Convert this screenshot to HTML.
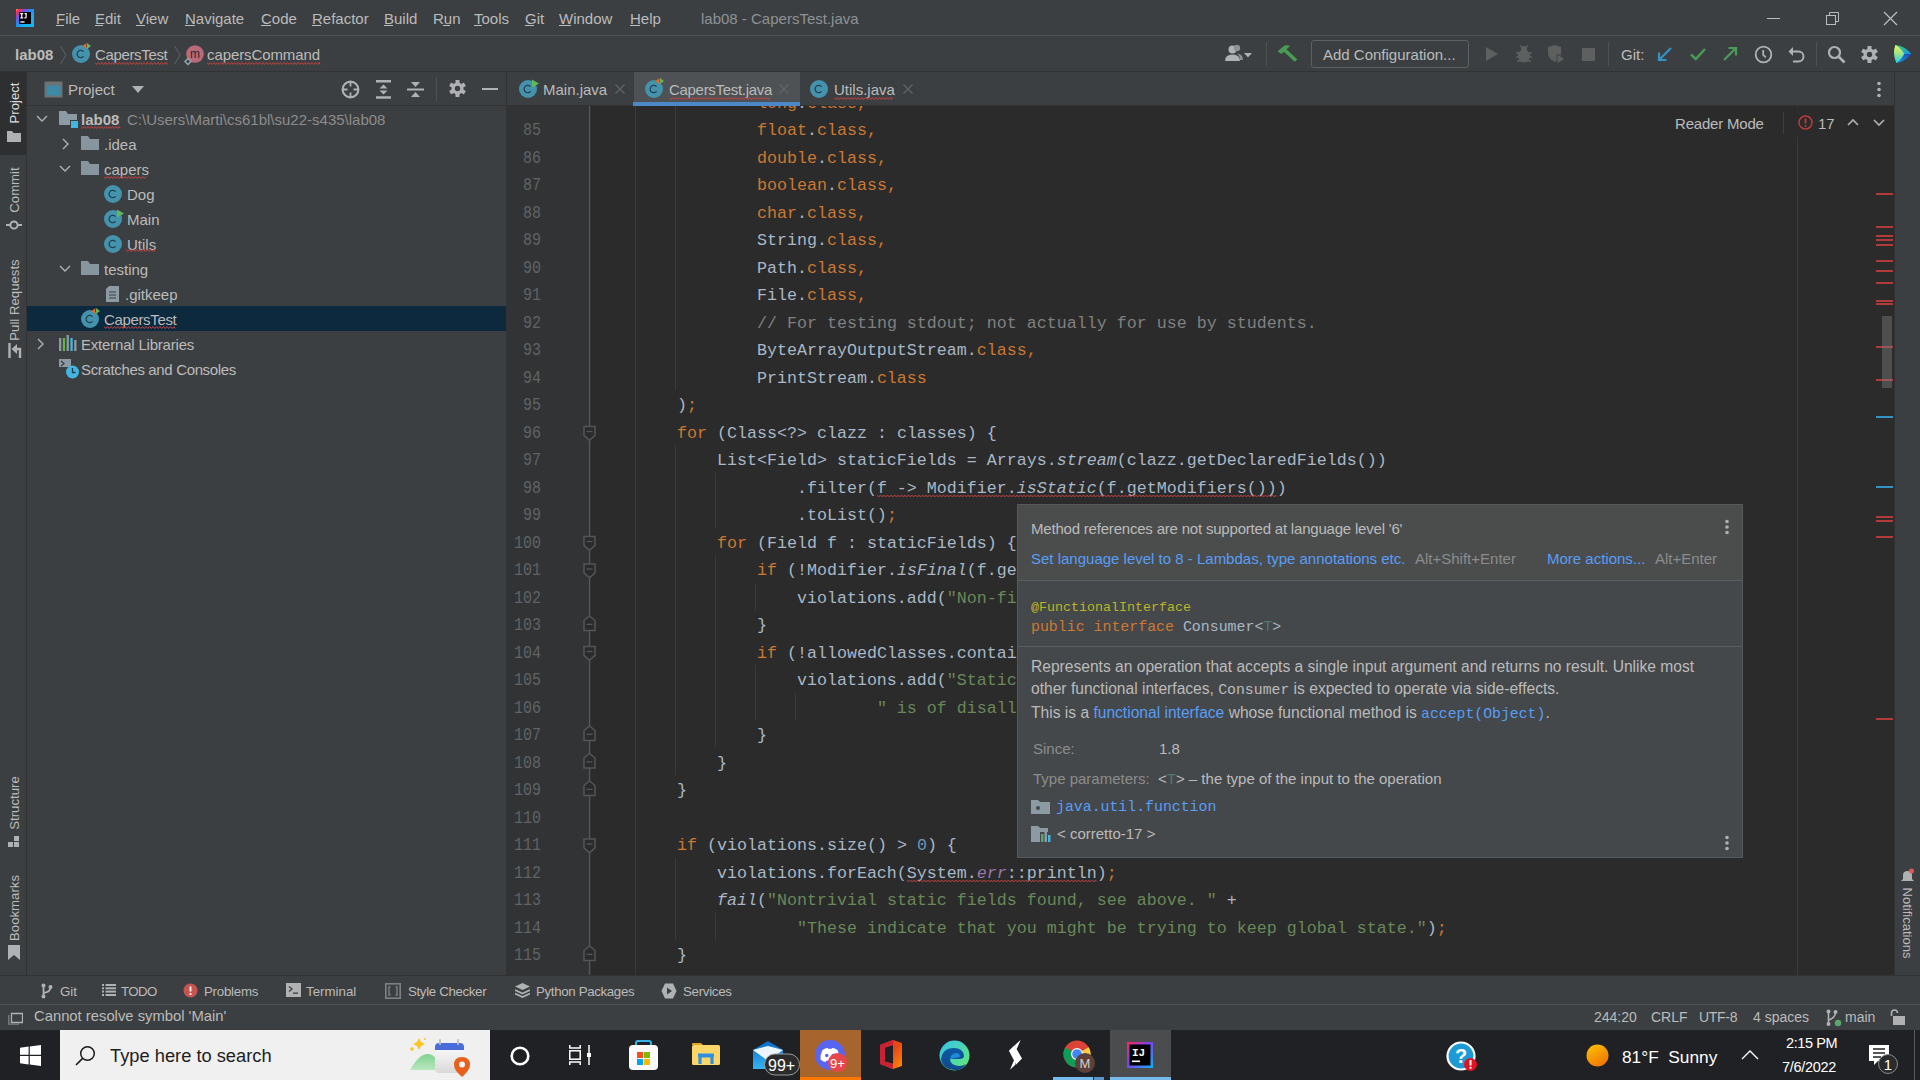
<!DOCTYPE html>
<html><head><meta charset="utf-8">
<style>
*{margin:0;padding:0;box-sizing:border-box}
html,body{width:1920px;height:1080px;overflow:hidden;background:#3c3f41}
body{position:relative;font-family:"Liberation Sans",sans-serif;font-size:15px;color:#bbbbbb}
.a{position:absolute}
.t{position:absolute;white-space:nowrap;line-height:1}
.mono{font-family:"Liberation Mono",monospace}
/* code */
#code{position:absolute;left:597px;top:106px;font-family:"Liberation Mono",monospace;font-size:16.67px;color:#a9b7c6;white-space:pre}
#code div{position:absolute;left:0;height:27.5px;line-height:27.5px}
.k{color:#cc7832}.s{color:#6a8759}.c{color:#808080}.n{color:#6897bb}.i{font-style:italic}.f{color:#9876aa;font-style:italic}
.ln{position:absolute;left:0;width:34px;text-align:right;font-family:"Liberation Mono",monospace;font-size:15px;color:#606366;line-height:27.5px;height:27.5px;transform:scaleY(1.2);transform-origin:50% 50%}
.sq{}
.sqt{}
u{text-decoration:none;border-bottom:1px solid currentColor}
</style></head><body>

<!-- title/menu bar -->
<div class="a" style="left:0;top:0;width:1920px;height:35px;background:#3c3f41"></div>
<div class="a" style="left:0;top:35px;width:1920px;height:1px;background:#515151"></div>
<!-- nav bar -->
<div class="a" style="left:0;top:36px;width:1920px;height:35px;background:#3c3f41"></div>
<div class="a" style="left:0;top:71px;width:1920px;height:1px;background:#323232"></div>

<!-- left stripe -->
<div class="a" style="left:0;top:72px;width:26px;height:904px;background:#3c3f41"></div>
<div class="a" style="left:0;top:72px;width:26px;height:83px;background:#2d2f30"></div>
<div class="a" style="left:26px;top:72px;width:1px;height:904px;background:#323232"></div>

<!-- project panel -->
<div class="a" style="left:27px;top:72px;width:479px;height:904px;background:#3c3f41"></div>
<div class="a" style="left:27px;top:105px;width:479px;height:1px;background:#323232"></div>
<div class="a" style="left:27px;top:306px;width:479px;height:25px;background:#0d293e"></div>
<div class="a" style="left:506px;top:72px;width:1px;height:904px;background:#323232"></div>

<!-- editor tabs -->
<div class="a" style="left:507px;top:72px;width:1390px;height:33px;background:#3c3f41"></div>
<div class="a" style="left:634px;top:72px;width:166px;height:33px;background:#4e5254"></div>
<div class="a" style="left:507px;top:105px;width:1390px;height:1px;background:#323232"></div>
<div class="a" style="left:633px;top:102px;width:167px;height:4px;background:#4a88c7"></div>

<!-- editor -->
<div class="a" style="left:507px;top:106px;width:1390px;height:869px;background:#2b2b2b"></div>
<div class="a" style="left:507px;top:106px;width:84px;height:869px;background:#313335"></div>
<div class="a" style="left:1797px;top:106px;width:1px;height:869px;background:#3b3b3b"></div>

<!-- code -->
<div id="code" style="height:869px;width:1200px;overflow:hidden">
<div style="top:-16.50px">                <span class="k">long</span>.<span class="k">class,</span></div>
<div style="top:11.00px">                <span class="k">float</span>.<span class="k">class,</span></div>
<div style="top:38.50px">                <span class="k">double</span>.<span class="k">class,</span></div>
<div style="top:66.00px">                <span class="k">boolean</span>.<span class="k">class,</span></div>
<div style="top:93.50px">                <span class="k">char</span>.<span class="k">class,</span></div>
<div style="top:121.00px">                String.<span class="k">class,</span></div>
<div style="top:148.50px">                Path.<span class="k">class,</span></div>
<div style="top:176.00px">                File.<span class="k">class,</span></div>
<div style="top:203.50px">                <span class="c">// For testing stdout; not actually for use by students.</span></div>
<div style="top:231.00px">                ByteArrayOutputStream.<span class="k">class,</span></div>
<div style="top:258.50px">                PrintStream.<span class="k">class</span></div>
<div style="top:286.00px">        )<span class="k">;</span></div>
<div style="top:313.50px">        <span class="k">for</span> (Class&lt;?&gt; clazz : classes) {</div>
<div style="top:341.00px">            List&lt;Field&gt; staticFields = Arrays.<span class="i">stream</span>(clazz.getDeclaredFields())</div>
<div style="top:368.50px">                    .filter(<span class="sq">f -&gt; Modifier.<span class="i">isStatic</span>(f.getModifiers())</span>)</div>
<div style="top:396.00px">                    .toList()<span class="k">;</span></div>
<div style="top:423.50px">            <span class="k">for</span> (Field f : staticFields) {</div>
<div style="top:451.00px">                <span class="k">if</span> (!Modifier.<span class="i">isFinal</span>(f.getModifiers())) {</div>
<div style="top:478.50px">                    violations.add(<span class="s">"Non-final static field "</span> + f.getName())<span class="k">;</span></div>
<div style="top:506.00px">                }</div>
<div style="top:533.50px">                <span class="k">if</span> (!allowedClasses.contains(f.getType())) {</div>
<div style="top:561.00px">                    violations.add(<span class="s">"Static field "</span> + f.getName() +</div>
<div style="top:588.50px">                            <span class="s">" is of disallowed type "</span> + f.getType())<span class="k">;</span></div>
<div style="top:616.00px">                }</div>
<div style="top:643.50px">            }</div>
<div style="top:671.00px">        }</div>
<div style="top:698.50px"></div>
<div style="top:726.00px">        <span class="k">if</span> (violations.size() &gt; <span class="n">0</span>) {</div>
<div style="top:753.50px">            violations.forEach(<span class="sq">System.<span class="f">err</span>::println</span>)<span class="k">;</span></div>
<div style="top:781.00px">            <span class="i">fail</span>(<span class="s">"Nontrivial static fields found, see above. "</span> +</div>
<div style="top:808.50px">                    <span class="s">"These indicate that you might be trying to keep global state."</span>)<span class="k">;</span></div>
<div style="top:836.00px">        }</div>
<div style="top:863.50px"></div>
</div>
<div class="a" style="left:507px;top:106px;width:83px;height:869px;overflow:hidden">
<div class="ln" style="top:11.00px">85</div>
<div class="ln" style="top:38.50px">86</div>
<div class="ln" style="top:66.00px">87</div>
<div class="ln" style="top:93.50px">88</div>
<div class="ln" style="top:121.00px">89</div>
<div class="ln" style="top:148.50px">90</div>
<div class="ln" style="top:176.00px">91</div>
<div class="ln" style="top:203.50px">92</div>
<div class="ln" style="top:231.00px">93</div>
<div class="ln" style="top:258.50px">94</div>
<div class="ln" style="top:286.00px">95</div>
<div class="ln" style="top:313.50px">96</div>
<div class="ln" style="top:341.00px">97</div>
<div class="ln" style="top:368.50px">98</div>
<div class="ln" style="top:396.00px">99</div>
<div class="ln" style="top:423.50px">100</div>
<div class="ln" style="top:451.00px">101</div>
<div class="ln" style="top:478.50px">102</div>
<div class="ln" style="top:506.00px">103</div>
<div class="ln" style="top:533.50px">104</div>
<div class="ln" style="top:561.00px">105</div>
<div class="ln" style="top:588.50px">106</div>
<div class="ln" style="top:616.00px">107</div>
<div class="ln" style="top:643.50px">108</div>
<div class="ln" style="top:671.00px">109</div>
<div class="ln" style="top:698.50px">110</div>
<div class="ln" style="top:726.00px">111</div>
<div class="ln" style="top:753.50px">112</div>
<div class="ln" style="top:781.00px">113</div>
<div class="ln" style="top:808.50px">114</div>
<div class="ln" style="top:836.00px">115</div>
</div>

<!-- right stripe -->
<div class="a" style="left:1894px;top:72px;width:1px;height:904px;background:#323232"></div>
<div class="a" style="left:1895px;top:72px;width:25px;height:904px;background:#3c3f41"></div>

<!-- bottom stripe & status -->
<div class="a" style="left:0;top:975px;width:1920px;height:1px;background:#323232"></div>
<div class="a" style="left:0;top:976px;width:1920px;height:28px;background:#3c3f41"></div>
<div class="a" style="left:0;top:1004px;width:1920px;height:1px;background:#515151"></div>
<div class="a" style="left:0;top:1005px;width:1920px;height:25px;background:#3c3f41"></div>

<!-- taskbar -->
<div class="a" style="left:0;top:1030px;width:1920px;height:50px;background:#1f2023"></div>
<div class="a" style="left:61px;top:1031px;width:429px;height:49px;background:#f0f0f0"></div>


<!-- ===== top ===== -->
<svg class="a" style="left:16px;top:9px" width="18" height="18" viewBox="0 0 18 18"><defs><linearGradient id="ijg" x1="0" y1="0" x2="0.7" y2="0.7"><stop offset="0" stop-color="#ff9a3c"/><stop offset="0.15" stop-color="#fe2857"/><stop offset="0.4" stop-color="#7b4de0"/><stop offset="0.65" stop-color="#1d8cf5"/><stop offset="1" stop-color="#17b3f0"/></linearGradient></defs>
<rect x="0" y="0" width="18" height="18" fill="url(#ijg)"/><rect x="3" y="3" width="12" height="12" fill="#0a0008"/>
<path d="M4.3 4.6H7.2M5.75 4.6V8.9M4.3 8.9H7.2M8.6 4.6H10.8M10.1 4.6V8.2Q10.1 8.9 9.2 8.9H8.4" stroke="#fff" stroke-width="1.2" fill="none"/><rect x="4.3" y="12.3" width="4.3" height="1.3" fill="#fff"/></svg>
<div class="t" style="left:56px;top:11.30px;font-size:15px;color:#bbbbbb">File</div>
<div class="t" style="left:95px;top:11.30px;font-size:15px;color:#bbbbbb">Edit</div>
<div class="t" style="left:136px;top:11.30px;font-size:15px;color:#bbbbbb">View</div>
<div class="t" style="left:185px;top:11.30px;font-size:15px;color:#bbbbbb">Navigate</div>
<div class="t" style="left:261px;top:11.30px;font-size:15px;color:#bbbbbb">Code</div>
<div class="t" style="left:312px;top:11.30px;font-size:15px;color:#bbbbbb">Refactor</div>
<div class="t" style="left:384px;top:11.30px;font-size:15px;color:#bbbbbb">Build</div>
<div class="t" style="left:433px;top:11.30px;font-size:15px;color:#bbbbbb">Run</div>
<div class="t" style="left:474px;top:11.30px;font-size:15px;color:#bbbbbb">Tools</div>
<div class="t" style="left:525px;top:11.30px;font-size:15px;color:#bbbbbb">Git</div>
<div class="t" style="left:559px;top:11.30px;font-size:15px;color:#bbbbbb">Window</div>
<div class="t" style="left:630px;top:11.30px;font-size:15px;color:#bbbbbb">Help</div>
<div class="a" style="left:56px;top:25px;width:8px;height:1px;background:#bbbbbb"></div>
<div class="a" style="left:95px;top:25px;width:8px;height:1px;background:#bbbbbb"></div>
<div class="a" style="left:136px;top:25px;width:9px;height:1px;background:#bbbbbb"></div>
<div class="a" style="left:185px;top:25px;width:10px;height:1px;background:#bbbbbb"></div>
<div class="a" style="left:261px;top:25px;width:10px;height:1px;background:#bbbbbb"></div>
<div class="a" style="left:312px;top:25px;width:9px;height:1px;background:#bbbbbb"></div>
<div class="a" style="left:384px;top:25px;width:9px;height:1px;background:#bbbbbb"></div>
<div class="a" style="left:443px;top:25px;width:7px;height:1px;background:#bbbbbb"></div>
<div class="a" style="left:474px;top:25px;width:8px;height:1px;background:#bbbbbb"></div>
<div class="a" style="left:525px;top:25px;width:9px;height:1px;background:#bbbbbb"></div>
<div class="a" style="left:559px;top:25px;width:12px;height:1px;background:#bbbbbb"></div>
<div class="a" style="left:630px;top:25px;width:10px;height:1px;background:#bbbbbb"></div>
<div class="t" style="left:701px;top:11.30px;font-size:15px;color:#8e9296">lab08 - CapersTest.java</div>
<div class="a" style="left:1767px;top:18px;width:13px;height:1px;background:#bbbbbb"></div>
<svg class="a" style="left:1825px;top:11px" width="15" height="15" viewBox="0 0 15 15"><rect x="1.5" y="4.5" width="9" height="9" fill="none" stroke="#bbb"/><path d="M4.5 4.5V1.5h9v9h-3" fill="none" stroke="#bbb"/></svg>
<svg class="a" style="left:1883px;top:11px" width="15" height="15" viewBox="0 0 15 15"><path d="M1 1L14 14M14 1L1 14" stroke="#bbb" stroke-width="1.3"/></svg>
<div class="t" style="left:15px;top:47.30px;font-size:15px;color:#bbbbbb;font-weight:bold">lab08</div>
<svg class="a" style="left:59px;top:45px" width="9" height="20" viewBox="0 0 9 20"><path d="M1.5 1L7 10L1.5 19" fill="none" stroke="#5f6366" stroke-width="1"/></svg>
<svg class="a" style="left:72px;top:43px" width="21" height="22" viewBox="0 0 21 22"><circle cx="9" cy="11" r="9" fill="#4592ad"/><path d="M11.6 8.6A3.7 3.7 0 1 0 11.6 13.4" fill="none" stroke="#1e3a46" stroke-width="1.15"/><path d="M14.3 0V6L10.8 3Z" fill="#f26522"/><path d="M15 0V6L19 3Z" fill="#5fb85f"/></svg>
<div class="t" style="left:95px;top:47.30px;font-size:15px;color:#bbbbbb;letter-spacing:-0.35px"><span class="sqt">CapersTest</span></div>
<svg class="a" style="left:173px;top:45px" width="9" height="20" viewBox="0 0 9 20"><path d="M1.5 1L7 10L1.5 19" fill="none" stroke="#5f6366" stroke-width="1"/></svg>
<svg class="a" style="left:183px;top:44px" width="22" height="22" viewBox="0 0 22 22"><circle cx="12" cy="10" r="8.8" fill="#b9697a"/><text x="12" y="14" font-family="Liberation Sans" font-size="12" fill="#2b2b2b" text-anchor="middle">m</text><path d="M5 14.5L8 17.5L5 20.5L2 17.5Z" fill="#3c3f41" stroke="#9aa7b0" stroke-width="1.4"/></svg>
<div class="t" style="left:207px;top:47.30px;font-size:15px;color:#bbbbbb;letter-spacing:-0.1px"><span class="sqt">capersCommand</span></div>
<svg class="a" style="left:1224px;top:44px" width="34" height="20" viewBox="0 0 34 20"><circle cx="8.5" cy="5.5" r="4" fill="#afb1b3"/><path d="M1 17Q1 10.5 8.5 10.5Q16 10.5 16 17Z" fill="#afb1b3"/><circle cx="13" cy="4" r="3.2" fill="#8f9193"/><path d="M12.5 9.5Q19 9.5 19 16H16Q16 11 12.5 9.5Z" fill="#8f9193"/><path d="M20 9h8l-4 4.5Z" fill="#afb1b3"/></svg>
<div class="a" style="left:1266px;top:42px;width:1px;height:24px;background:#515151"></div>
<svg class="a" style="left:1277px;top:44px" width="20" height="20" viewBox="0 0 20 20"><path d="M0.5 7.5L7.5 1.5L12 1.3L12.5 2.5L4.5 10Z" fill="#499c54"/><path d="M7 5.5L19 16.5" stroke="#499c54" stroke-width="3.6"/></svg>
<div class="a" style="left:1311px;top:40px;width:158px;height:28px;border:1px solid #5e6060;border-radius:3px"></div>
<div class="t" style="left:1323px;top:47.30px;font-size:15px;color:#bbbbbb">Add Configuration...</div>
<svg class="a" style="left:1485px;top:46px" width="14" height="16" viewBox="0 0 14 16"><path d="M1 1L13 8L1 15Z" fill="#5e6060"/></svg>
<svg class="a" style="left:1515px;top:44px" width="18" height="20" viewBox="0 0 18 20"><ellipse cx="9" cy="12" rx="6" ry="6.5" fill="#5e6060"/><circle cx="9" cy="5" r="3" fill="#5e6060"/><path d="M1 9h16M1 13h16M2 17h14M5 1l2 3M13 1l-2 3" stroke="#5e6060" stroke-width="1.3"/></svg>
<svg class="a" style="left:1546px;top:44px" width="22" height="22" viewBox="0 0 22 22"><path d="M2 3L9 1L15 3V9Q15 15 9 18Q2 15 2 9Z" fill="#5e6060"/><path d="M11 10L19 15L11 20Z" fill="#5e6060" stroke="#3c3f41" stroke-width="1"/></svg>
<div class="a" style="left:1582px;top:48px;width:13px;height:13px;background:#5e6060"></div>
<div class="a" style="left:1608px;top:42px;width:1px;height:24px;background:#515151"></div>
<div class="t" style="left:1621px;top:47.30px;font-size:15px;color:#bbbbbb">Git:</div>
<svg class="a" style="left:1656px;top:45px" width="18" height="18" viewBox="0 0 18 18"><path d="M15 3L3 15M3 7.5V15H10.5" fill="none" stroke="#3592c4" stroke-width="2.2"/></svg>
<svg class="a" style="left:1689px;top:45px" width="18" height="18" viewBox="0 0 18 18"><path d="M2 9.5L6.8 14L16 4" fill="none" stroke="#499c54" stroke-width="2.4"/></svg>
<svg class="a" style="left:1721px;top:45px" width="18" height="18" viewBox="0 0 18 18"><path d="M3 15L15 3M7.5 3H15V10.5" fill="none" stroke="#499c54" stroke-width="2.2"/></svg>
<svg class="a" style="left:1754px;top:45px" width="19" height="19" viewBox="0 0 19 19"><circle cx="9.5" cy="9.5" r="7.8" fill="none" stroke="#afb1b3" stroke-width="1.8"/><path d="M9.2 5V9.8L11.8 12.4" fill="none" stroke="#afb1b3" stroke-width="1.8"/></svg>
<svg class="a" style="left:1787px;top:45px" width="19" height="19" viewBox="0 0 19 19"><path d="M4 6.5H11.5A5 5 0 0 1 11.5 16.5H6" fill="none" stroke="#afb1b3" stroke-width="1.9"/><path d="M1.5 6.5L6 2V11Z" fill="#afb1b3"/></svg>
<div class="a" style="left:1816px;top:42px;width:1px;height:24px;background:#515151"></div>
<svg class="a" style="left:1827px;top:45px" width="19" height="19" viewBox="0 0 19 19"><circle cx="7.5" cy="7.5" r="5.5" fill="none" stroke="#afb1b3" stroke-width="2.2"/><path d="M11.5 11.5L17.5 17.5" stroke="#afb1b3" stroke-width="2.6"/></svg>
<svg class="a" style="left:1861px;top:46px" width="17" height="17" viewBox="0 0 17 17"><g fill="#afb1b3"><circle cx="8.5" cy="8.5" r="6"/><rect x="6.5" y="0" width="4" height="4" rx="0.5"/><rect x="6.5" y="13" width="4" height="4" rx="0.5"/><rect x="6.5" y="0" width="4" height="4" rx="0.5" transform="rotate(60 8.5 8.5)"/><rect x="6.5" y="13" width="4" height="4" rx="0.5" transform="rotate(60 8.5 8.5)"/><rect x="6.5" y="0" width="4" height="4" rx="0.5" transform="rotate(120 8.5 8.5)"/><rect x="6.5" y="13" width="4" height="4" rx="0.5" transform="rotate(120 8.5 8.5)"/></g><circle cx="8.5" cy="8.5" r="2.7" fill="#3c3f41"/></svg>
<svg class="a" style="left:1893px;top:44px" width="20" height="20" viewBox="0 0 20 20"><defs><linearGradient id="tbl" x1="0" y1="0" x2="0" y2="1"><stop offset="0" stop-color="#f4f65a"/><stop offset="0.5" stop-color="#98e38a"/><stop offset="1" stop-color="#22d0e6"/></linearGradient><linearGradient id="tbu" x1="0" y1="0" x2="1" y2="1"><stop offset="0" stop-color="#2fd67a"/><stop offset="1" stop-color="#1a8ee8"/></linearGradient><linearGradient id="tbd" x1="1" y1="0" x2="0" y2="1"><stop offset="0" stop-color="#1f47b8"/><stop offset="1" stop-color="#1596e8"/></linearGradient></defs><path d="M2.5 1Q-0.5 10 3.5 19L11 10Z" fill="url(#tbl)"/><path d="M2.5 1Q12 2 18.5 10L11 10Z" fill="url(#tbu)"/><path d="M3.5 19Q13 17 18.5 10L11 10Z" fill="url(#tbd)"/><path d="M2.5 1Q9 5 11 10Q9 15 3.5 19Q-0.5 10 2.5 1Z" fill="url(#tbl)"/></svg>
<!-- ===== project panel ===== -->
<div class="t" style="left:15px;top:102.5px;font-size:13.2px;color:#dddddd;transform:translate(-50%,-50%) rotate(-90deg)">Project</div>
<svg class="a" style="left:7px;top:130px" width="14" height="12" viewBox="0 0 14 12"><path d="M0 1H5L6.5 3H14V12H0Z" fill="#afb1b3"/></svg>
<div class="t" style="left:15px;top:189.5px;font-size:13.2px;color:#bbbbbb;transform:translate(-50%,-50%) rotate(-90deg)">Commit</div>
<svg class="a" style="left:6px;top:217px" width="16" height="16" viewBox="0 0 16 16"><circle cx="8" cy="8" r="3.6" fill="none" stroke="#afb1b3" stroke-width="2"/><path d="M0 8H4M12 8H16" stroke="#afb1b3" stroke-width="2"/></svg>
<div class="t" style="left:15px;top:299.5px;font-size:13.2px;color:#bbbbbb;transform:translate(-50%,-50%) rotate(-90deg)">Pull Requests</div>
<svg class="a" style="left:8px;top:343px" width="14" height="15" viewBox="0 0 14 15"><path d="M1.5 0V15M12 15V6H6" fill="none" stroke="#afb1b3" stroke-width="2.4"/><path d="M3.5 6L9 1V11Z" fill="#afb1b3"/></svg>
<div class="t" style="left:15px;top:803.0px;font-size:13.2px;color:#bbbbbb;transform:translate(-50%,-50%) rotate(-90deg)">Structure</div>
<svg class="a" style="left:8px;top:836px" width="13" height="12" viewBox="0 0 13 12"><rect x="6" y="0" width="5" height="5" fill="#afb1b3"/><rect x="0" y="6" width="5" height="5" fill="#afb1b3"/><rect x="6" y="6" width="5" height="5" fill="#afb1b3"/></svg>
<div class="t" style="left:15px;top:908.0px;font-size:13.2px;color:#bbbbbb;transform:translate(-50%,-50%) rotate(-90deg)">Bookmarks</div>
<svg class="a" style="left:8px;top:945px" width="12" height="15" viewBox="0 0 12 15"><path d="M0 0H12V15L6 10L0 15Z" fill="#afb1b3"/></svg>
<svg class="a" style="left:44px;top:81px" width="19" height="17" viewBox="0 0 19 17"><rect x="0.5" y="0.5" width="18" height="16" fill="#6e7274"/><rect x="2.5" y="4.5" width="14" height="10" fill="#3d8aa6"/></svg>
<div class="t" style="left:68px;top:82.30px;font-size:15px;color:#bbbbbb">Project</div>
<svg class="a" style="left:132px;top:86px" width="12" height="8" viewBox="0 0 12 8"><path d="M0 0H12L6 7Z" fill="#afb1b3"/></svg>
<svg class="a" style="left:341px;top:80px" width="19" height="19" viewBox="0 0 19 19"><circle cx="9.5" cy="9.5" r="7.9" fill="none" stroke="#afb1b3" stroke-width="2.1"/><path d="M9.5 1.5V6.5M9.5 12.5V17.5M1.5 9.5H6.5M12.5 9.5H17.5" stroke="#afb1b3" stroke-width="1.8"/></svg>
<svg class="a" style="left:375px;top:80px" width="17" height="19" viewBox="0 0 17 19"><path d="M1 1.3H16M1 17.5H16" stroke="#afb1b3" stroke-width="2.6"/><path d="M8.5 4.5L12.5 8.6H4.5Z M8.5 14.5L12.5 10.4H4.5Z" fill="#afb1b3"/></svg>
<svg class="a" style="left:407px;top:80px" width="17" height="19" viewBox="0 0 17 19"><path d="M0 9.5H17" stroke="#afb1b3" stroke-width="2"/><path d="M4 2H13L8.5 7Z M4 17H13L8.5 12Z" fill="#afb1b3"/></svg>
<div class="a" style="left:436px;top:77px;width:1px;height:24px;background:#515151"></div>
<svg class="a" style="left:449px;top:80px" width="17" height="17" viewBox="0 0 17 17"><g fill="#afb1b3"><circle cx="8.5" cy="8.5" r="6"/><rect x="6.5" y="0" width="4" height="4" rx="0.5"/><rect x="6.5" y="13" width="4" height="4" rx="0.5"/><rect x="6.5" y="0" width="4" height="4" rx="0.5" transform="rotate(60 8.5 8.5)"/><rect x="6.5" y="13" width="4" height="4" rx="0.5" transform="rotate(60 8.5 8.5)"/><rect x="6.5" y="0" width="4" height="4" rx="0.5" transform="rotate(120 8.5 8.5)"/><rect x="6.5" y="13" width="4" height="4" rx="0.5" transform="rotate(120 8.5 8.5)"/></g><circle cx="8.5" cy="8.5" r="2.7" fill="#3c3f41"/></svg>
<div class="a" style="left:482px;top:88px;width:16px;height:2px;background:#afb1b3"></div>
<svg class="a" style="left:36px;top:115px" width="12" height="8" viewBox="0 0 12 8"><path d="M1 1L6 6L11 1" fill="none" stroke="#afb1b3" stroke-width="1.4"/></svg>
<svg class="a" style="left:59px;top:111px" width="20" height="18" viewBox="0 0 20 18"><path d="M0 0H7L9 3H18V14H0Z" fill="#8b9aa3"/><rect x="11" y="9" width="8" height="8" fill="#3c3f41"/><rect x="12" y="10" width="7" height="7" fill="#40b6e0"/></svg>
<div class="t" style="left:81px;top:111.80px;font-size:15px;color:#bbbbbb;font-weight:bold"><span class="sqt">lab08</span></div>
<div class="t" style="left:127px;top:111.80px;font-size:15px;color:#8c8c8c">C:\Users\Marti\cs61bl\su22-s435\lab08</div>
<svg class="a" style="left:62px;top:138px" width="8" height="12" viewBox="0 0 8 12"><path d="M1 1L6 6L1 11" fill="none" stroke="#afb1b3" stroke-width="1.4"/></svg>
<svg class="a" style="left:81px;top:136px" width="18" height="15" viewBox="0 0 18 15"><path d="M0 0H7L9 3H18V14H0Z" fill="#8b9aa3" opacity="0.95"/></svg>
<div class="t" style="left:104px;top:136.80px;font-size:15px;color:#bbbbbb">.idea</div>
<svg class="a" style="left:59px;top:165px" width="12" height="8" viewBox="0 0 12 8"><path d="M1 1L6 6L11 1" fill="none" stroke="#afb1b3" stroke-width="1.4"/></svg>
<svg class="a" style="left:81px;top:161px" width="18" height="15" viewBox="0 0 18 15"><path d="M0 0H7L9 3H18V14H0Z" fill="#8b9aa3" opacity="0.95"/></svg>
<div class="t" style="left:104px;top:161.80px;font-size:15px;color:#bbbbbb"><span class="sqt">capers</span></div>
<svg class="a" style="left:104px;top:183px" width="21" height="22" viewBox="0 0 21 22"><circle cx="9" cy="11" r="9" fill="#4592ad"/><path d="M11.6 8.6A3.7 3.7 0 1 0 11.6 13.4" fill="none" stroke="#1e3a46" stroke-width="1.15"/></svg>
<div class="t" style="left:127px;top:186.80px;font-size:15px;color:#bbbbbb">Dog</div>
<svg class="a" style="left:104px;top:208px" width="21" height="22" viewBox="0 0 21 22"><circle cx="9" cy="11" r="9" fill="#4592ad"/><path d="M11.6 8.6A3.7 3.7 0 1 0 11.6 13.4" fill="none" stroke="#1e3a46" stroke-width="1.15"/><path d="M13 1.5L20 5.5L13 9.5Z" fill="#5fb85f"/></svg>
<div class="t" style="left:127px;top:211.80px;font-size:15px;color:#bbbbbb">Main</div>
<svg class="a" style="left:104px;top:233px" width="21" height="22" viewBox="0 0 21 22"><circle cx="9" cy="11" r="9" fill="#4592ad"/><path d="M11.6 8.6A3.7 3.7 0 1 0 11.6 13.4" fill="none" stroke="#1e3a46" stroke-width="1.15"/></svg>
<div class="t" style="left:127px;top:236.80px;font-size:15px;color:#bbbbbb"><span class="sqt">Utils</span></div>
<svg class="a" style="left:59px;top:265px" width="12" height="8" viewBox="0 0 12 8"><path d="M1 1L6 6L11 1" fill="none" stroke="#afb1b3" stroke-width="1.4"/></svg>
<svg class="a" style="left:81px;top:261px" width="18" height="15" viewBox="0 0 18 15"><path d="M0 0H7L9 3H18V14H0Z" fill="#8b9aa3" opacity="0.95"/></svg>
<div class="t" style="left:104px;top:261.80px;font-size:15px;color:#bbbbbb">testing</div>
<svg class="a" style="left:106px;top:286px" width="13" height="16" viewBox="0 0 13 16"><path d="M3 0H13V16H0V3Z" fill="#8b9aa3"/><path d="M3 6H10M3 9H10M3 12H10" stroke="#3c3f41" stroke-width="1.2"/></svg>
<div class="t" style="left:125px;top:286.80px;font-size:15px;color:#bbbbbb">.gitkeep</div>
<svg class="a" style="left:81px;top:308px" width="21" height="22" viewBox="0 0 21 22"><circle cx="9" cy="11" r="9" fill="#4592ad"/><path d="M11.6 8.6A3.7 3.7 0 1 0 11.6 13.4" fill="none" stroke="#1e3a46" stroke-width="1.15"/><path d="M14.3 0V6L10.8 3Z" fill="#f26522"/><path d="M15 0V6L19 3Z" fill="#5fb85f"/></svg>
<div class="t" style="left:104px;top:311.80px;font-size:15px;color:#bbbbbb;letter-spacing:-0.35px"><span class="sqt">CapersTest</span></div>
<svg class="a" style="left:37px;top:338px" width="8" height="12" viewBox="0 0 8 12"><path d="M1 1L6 6L1 11" fill="none" stroke="#afb1b3" stroke-width="1.4"/></svg>
<svg class="a" style="left:59px;top:335px" width="19" height="16" viewBox="0 0 19 16"><rect x="0" y="3" width="2.3" height="13" fill="#8b9aa3"/><rect x="3.8" y="3" width="2.3" height="13" fill="#62b543"/><rect x="7.6" y="0" width="2.3" height="16" fill="#8b9aa3"/><rect x="11.4" y="3" width="2.3" height="13" fill="#40b6e0"/><rect x="15.2" y="5" width="2.3" height="11" fill="#8b9aa3"/></svg>
<div class="t" style="left:81px;top:336.80px;font-size:15px;color:#bbbbbb;letter-spacing:-0.2px">External Libraries</div>
<svg class="a" style="left:59px;top:359px" width="20" height="20" viewBox="0 0 20 20"><path d="M0 0H12V8H0Z" fill="#8b9aa3"/><path d="M2 2L5 4.5L2 7" stroke="#3c3f41" fill="none" stroke-width="1.2"/><circle cx="13.5" cy="13" r="6.5" fill="#40b6e0"/><path d="M13.5 9V13.5H16.5" stroke="#1f3a45" fill="none" stroke-width="1.3"/></svg>
<div class="t" style="left:81px;top:361.80px;font-size:15px;color:#bbbbbb;letter-spacing:-0.35px">Scratches and Consoles</div>
<!-- ===== editor tabs ===== -->
<svg class="a" style="left:519px;top:78px" width="21" height="22" viewBox="0 0 21 22"><circle cx="9" cy="11" r="9" fill="#4592ad"/><path d="M11.6 8.6A3.7 3.7 0 1 0 11.6 13.4" fill="none" stroke="#1e3a46" stroke-width="1.15"/><path d="M13 1.5L20 5.5L13 9.5Z" fill="#5fb85f"/></svg>
<div class="t" style="left:543px;top:82.30px;font-size:15px;color:#bbbbbb">Main.java</div>
<svg class="a" style="left:615px;top:84px" width="10" height="10" viewBox="0 0 10 10"><path d="M0.5 0.5L9.5 9.5M9.5 0.5L0.5 9.5" stroke="#626567" stroke-width="1.15"/></svg>
<svg class="a" style="left:645px;top:78px" width="21" height="22" viewBox="0 0 21 22"><circle cx="9" cy="11" r="9" fill="#4592ad"/><path d="M11.6 8.6A3.7 3.7 0 1 0 11.6 13.4" fill="none" stroke="#1e3a46" stroke-width="1.15"/><path d="M14.3 0V6L10.8 3Z" fill="#f26522"/><path d="M15 0V6L19 3Z" fill="#5fb85f"/></svg>
<div class="t" style="left:669px;top:82.30px;font-size:15px;color:#bbbbbb;letter-spacing:-0.3px"><span class="sqt">CapersTest.java</span></div>
<svg class="a" style="left:779px;top:84px" width="10" height="10" viewBox="0 0 10 10"><path d="M0.5 0.5L9.5 9.5M9.5 0.5L0.5 9.5" stroke="#626567" stroke-width="1.15"/></svg>
<svg class="a" style="left:810px;top:78px" width="21" height="22" viewBox="0 0 21 22"><circle cx="9" cy="11" r="9" fill="#4592ad"/><path d="M11.6 8.6A3.7 3.7 0 1 0 11.6 13.4" fill="none" stroke="#1e3a46" stroke-width="1.15"/></svg>
<div class="t" style="left:834px;top:82.30px;font-size:15px;color:#bbbbbb"><span class="sqt">Utils.java</span></div>
<svg class="a" style="left:903px;top:84px" width="10" height="10" viewBox="0 0 10 10"><path d="M0.5 0.5L9.5 9.5M9.5 0.5L0.5 9.5" stroke="#626567" stroke-width="1.15"/></svg>
<svg class="a" style="left:1876px;top:81px" width="6" height="17" viewBox="0 0 6 17"><circle cx="3" cy="2.5" r="1.8" fill="#afb1b3"/><circle cx="3" cy="8.5" r="1.8" fill="#afb1b3"/><circle cx="3" cy="14.5" r="1.8" fill="#afb1b3"/></svg>
<!-- ===== editor decorations ===== -->
<div class="a" style="left:635px;top:106px;width:1px;height:869px;background:#393939"></div>
<div class="a" style="left:675px;top:106px;width:1px;height:284px;background:#393939"></div>
<div class="a" style="left:675px;top:445px;width:1px;height:330px;background:#393939"></div>
<div class="a" style="left:675px;top:858px;width:1px;height:82px;background:#393939"></div>
<div class="a" style="left:715px;top:473px;width:1px;height:55px;background:#393939"></div>
<div class="a" style="left:715px;top:555px;width:1px;height:192px;background:#393939"></div>
<div class="a" style="left:715px;top:913px;width:1px;height:28px;background:#393939"></div>
<div class="a" style="left:755px;top:583px;width:1px;height:28px;background:#393939"></div>
<div class="a" style="left:755px;top:665px;width:1px;height:55px;background:#393939"></div>
<div class="a" style="left:795px;top:693px;width:1px;height:28px;background:#393939"></div>
<svg class="a" style="left:583px;top:106px" width="14" height="869" viewBox="0 0 14 869"><path d="M6.5 0V869" stroke="#555759" stroke-width="1.2"/><path d="M1 320.6H12V329.3L6.5 334.3L1 329.3Z" fill="#2b2b2b" stroke="#545556" stroke-width="1.5"/><path d="M3.5 325.5H9.5" stroke="#545556" stroke-width="1.3"/><path d="M1 430.6H12V439.3L6.5 444.3L1 439.3Z" fill="#2b2b2b" stroke="#545556" stroke-width="1.5"/><path d="M3.5 435.5H9.5" stroke="#545556" stroke-width="1.3"/><path d="M1 458.1H12V466.8L6.5 471.8L1 466.8Z" fill="#2b2b2b" stroke="#545556" stroke-width="1.5"/><path d="M3.5 463.0H9.5" stroke="#545556" stroke-width="1.3"/><path d="M1 540.6H12V549.3L6.5 554.3L1 549.3Z" fill="#2b2b2b" stroke="#545556" stroke-width="1.5"/><path d="M3.5 545.5H9.5" stroke="#545556" stroke-width="1.3"/><path d="M1 733.1H12V741.8L6.5 746.8L1 741.8Z" fill="#2b2b2b" stroke="#545556" stroke-width="1.5"/><path d="M3.5 738.0H9.5" stroke="#545556" stroke-width="1.3"/><path d="M1 524.4H12V514.5L6.5 510.0L1 514.5Z" fill="#2b2b2b" stroke="#545556" stroke-width="1.5"/><path d="M3.5 518.4H9.5" stroke="#545556" stroke-width="1.3"/><path d="M1 634.4H12V624.5L6.5 620.0L1 624.5Z" fill="#2b2b2b" stroke="#545556" stroke-width="1.5"/><path d="M3.5 628.4H9.5" stroke="#545556" stroke-width="1.3"/><path d="M1 661.9H12V652.0L6.5 647.5L1 652.0Z" fill="#2b2b2b" stroke="#545556" stroke-width="1.5"/><path d="M3.5 655.9H9.5" stroke="#545556" stroke-width="1.3"/><path d="M1 689.4H12V679.5L6.5 675.0L1 679.5Z" fill="#2b2b2b" stroke="#545556" stroke-width="1.5"/><path d="M3.5 683.4H9.5" stroke="#545556" stroke-width="1.3"/><path d="M1 854.4H12V844.5L6.5 840.0L1 844.5Z" fill="#2b2b2b" stroke="#545556" stroke-width="1.5"/><path d="M3.5 848.4H9.5" stroke="#545556" stroke-width="1.3"/></svg>
<div class="t" style="left:1675px;top:116.30px;font-size:15px;color:#bbbbbb;letter-spacing:-0.2px">Reader Mode</div>
<div class="a" style="left:1796px;top:108px;width:3px;height:29px;background:#2b2b2b"></div>
<div class="a" style="left:1783px;top:112px;width:1px;height:22px;background:#3b3d3f"></div>
<svg class="a" style="left:1798px;top:115px" width="15" height="15" viewBox="0 0 15 15"><circle cx="7.5" cy="7.5" r="6.5" fill="none" stroke="#b83c3c" stroke-width="1.5"/><path d="M7.5 3.5V8.5" stroke="#b83c3c" stroke-width="1.8"/><circle cx="7.5" cy="11" r="1.1" fill="#b83c3c"/></svg>
<div class="t" style="left:1818px;top:116.30px;font-size:15px;color:#bbbbbb">17</div>
<svg class="a" style="left:1847px;top:118px" width="12" height="8" viewBox="0 0 12 8"><path d="M1 7L6 2L11 7" fill="none" stroke="#afb1b3" stroke-width="1.6"/></svg>
<svg class="a" style="left:1873px;top:119px" width="12" height="8" viewBox="0 0 12 8"><path d="M1 1L6 6L11 1" fill="none" stroke="#afb1b3" stroke-width="1.6"/></svg>
<div class="a" style="left:1876px;top:193px;width:17px;height:2px;background:#b13b3b"></div>
<div class="a" style="left:1876px;top:226px;width:17px;height:2px;background:#b13b3b"></div>
<div class="a" style="left:1876px;top:235px;width:17px;height:2px;background:#b13b3b"></div>
<div class="a" style="left:1876px;top:239px;width:17px;height:2px;background:#b13b3b"></div>
<div class="a" style="left:1876px;top:244px;width:17px;height:2px;background:#b13b3b"></div>
<div class="a" style="left:1876px;top:260px;width:17px;height:2px;background:#b13b3b"></div>
<div class="a" style="left:1876px;top:270px;width:17px;height:2px;background:#b13b3b"></div>
<div class="a" style="left:1876px;top:282px;width:17px;height:2px;background:#b13b3b"></div>
<div class="a" style="left:1876px;top:300px;width:17px;height:2px;background:#b13b3b"></div>
<div class="a" style="left:1876px;top:303px;width:17px;height:2px;background:#b13b3b"></div>
<div class="a" style="left:1876px;top:346px;width:17px;height:2px;background:#b13b3b"></div>
<div class="a" style="left:1876px;top:379px;width:17px;height:2px;background:#b13b3b"></div>
<div class="a" style="left:1876px;top:516px;width:17px;height:2px;background:#b13b3b"></div>
<div class="a" style="left:1876px;top:520px;width:17px;height:2px;background:#b13b3b"></div>
<div class="a" style="left:1876px;top:536px;width:17px;height:2px;background:#b13b3b"></div>
<div class="a" style="left:1876px;top:718px;width:17px;height:2px;background:#b13b3b"></div>
<div class="a" style="left:1876px;top:416px;width:17px;height:2px;background:#3592c4"></div>
<div class="a" style="left:1876px;top:486px;width:17px;height:2px;background:#3592c4"></div>
<div class="a" style="left:1882px;top:316px;width:10px;height:72px;background:rgba(120,122,124,0.45)"></div>
<svg class="a" style="left:1900px;top:868px" width="16" height="16" viewBox="0 0 16 16"><path d="M3 11V7Q3 3 8 3Q12 3 12 7V11L14 13H1Z" fill="#afb1b3"/><circle cx="11.5" cy="3" r="2.5" fill="#e55757"/></svg>
<div class="t" style="left:1907px;top:923px;font-size:13px;color:#bbbbbb;transform:translate(-50%,-50%) rotate(90deg)">Notifications</div>
<!-- ===== squiggles ===== -->
<svg class="a" style="left:95px;top:62px" width="73" height="3" viewBox="0 0 73 3"><polyline points="0.00,0.5 1.75,2.5 3.50,0.5 5.25,2.5 7.00,0.5 8.75,2.5 10.50,0.5 12.25,2.5 14.00,0.5 15.75,2.5 17.50,0.5 19.25,2.5 21.00,0.5 22.75,2.5 24.50,0.5 26.25,2.5 28.00,0.5 29.75,2.5 31.50,0.5 33.25,2.5 35.00,0.5 36.75,2.5 38.50,0.5 40.25,2.5 42.00,0.5 43.75,2.5 45.50,0.5 47.25,2.5 49.00,0.5 50.75,2.5 52.50,0.5 54.25,2.5 56.00,0.5 57.75,2.5 59.50,0.5 61.25,2.5 63.00,0.5 64.75,2.5 66.50,0.5 68.25,2.5 70.00,0.5 71.75,2.5 72.00,0.5" fill="none" stroke="#c94343" stroke-width="1"/></svg>
<svg class="a" style="left:207px;top:62px" width="114" height="3" viewBox="0 0 114 3"><polyline points="0.00,0.5 1.75,2.5 3.50,0.5 5.25,2.5 7.00,0.5 8.75,2.5 10.50,0.5 12.25,2.5 14.00,0.5 15.75,2.5 17.50,0.5 19.25,2.5 21.00,0.5 22.75,2.5 24.50,0.5 26.25,2.5 28.00,0.5 29.75,2.5 31.50,0.5 33.25,2.5 35.00,0.5 36.75,2.5 38.50,0.5 40.25,2.5 42.00,0.5 43.75,2.5 45.50,0.5 47.25,2.5 49.00,0.5 50.75,2.5 52.50,0.5 54.25,2.5 56.00,0.5 57.75,2.5 59.50,0.5 61.25,2.5 63.00,0.5 64.75,2.5 66.50,0.5 68.25,2.5 70.00,0.5 71.75,2.5 73.50,0.5 75.25,2.5 77.00,0.5 78.75,2.5 80.50,0.5 82.25,2.5 84.00,0.5 85.75,2.5 87.50,0.5 89.25,2.5 91.00,0.5 92.75,2.5 94.50,0.5 96.25,2.5 98.00,0.5 99.75,2.5 101.50,0.5 103.25,2.5 105.00,0.5 106.75,2.5 108.50,0.5 110.25,2.5 112.00,0.5 113.00,2.5" fill="none" stroke="#c94343" stroke-width="1"/></svg>
<svg class="a" style="left:81px;top:126px" width="40" height="3" viewBox="0 0 40 3"><polyline points="0.00,0.5 1.75,2.5 3.50,0.5 5.25,2.5 7.00,0.5 8.75,2.5 10.50,0.5 12.25,2.5 14.00,0.5 15.75,2.5 17.50,0.5 19.25,2.5 21.00,0.5 22.75,2.5 24.50,0.5 26.25,2.5 28.00,0.5 29.75,2.5 31.50,0.5 33.25,2.5 35.00,0.5 36.75,2.5 38.50,0.5 39.00,2.5" fill="none" stroke="#c94343" stroke-width="1"/></svg>
<svg class="a" style="left:104px;top:176px" width="43" height="3" viewBox="0 0 43 3"><polyline points="0.00,0.5 1.75,2.5 3.50,0.5 5.25,2.5 7.00,0.5 8.75,2.5 10.50,0.5 12.25,2.5 14.00,0.5 15.75,2.5 17.50,0.5 19.25,2.5 21.00,0.5 22.75,2.5 24.50,0.5 26.25,2.5 28.00,0.5 29.75,2.5 31.50,0.5 33.25,2.5 35.00,0.5 36.75,2.5 38.50,0.5 40.25,2.5 42.00,0.5" fill="none" stroke="#c94343" stroke-width="1"/></svg>
<svg class="a" style="left:126px;top:249px" width="30" height="3" viewBox="0 0 30 3"><polyline points="0.00,0.5 1.75,2.5 3.50,0.5 5.25,2.5 7.00,0.5 8.75,2.5 10.50,0.5 12.25,2.5 14.00,0.5 15.75,2.5 17.50,0.5 19.25,2.5 21.00,0.5 22.75,2.5 24.50,0.5 26.25,2.5 28.00,0.5 29.00,2.5" fill="none" stroke="#c94343" stroke-width="1"/></svg>
<svg class="a" style="left:104px;top:326px" width="72" height="3" viewBox="0 0 72 3"><polyline points="0.00,0.5 1.75,2.5 3.50,0.5 5.25,2.5 7.00,0.5 8.75,2.5 10.50,0.5 12.25,2.5 14.00,0.5 15.75,2.5 17.50,0.5 19.25,2.5 21.00,0.5 22.75,2.5 24.50,0.5 26.25,2.5 28.00,0.5 29.75,2.5 31.50,0.5 33.25,2.5 35.00,0.5 36.75,2.5 38.50,0.5 40.25,2.5 42.00,0.5 43.75,2.5 45.50,0.5 47.25,2.5 49.00,0.5 50.75,2.5 52.50,0.5 54.25,2.5 56.00,0.5 57.75,2.5 59.50,0.5 61.25,2.5 63.00,0.5 64.75,2.5 66.50,0.5 68.25,2.5 70.00,0.5 71.00,2.5" fill="none" stroke="#c94343" stroke-width="1"/></svg>
<svg class="a" style="left:669px;top:97px" width="102" height="3" viewBox="0 0 102 3"><polyline points="0.00,0.5 1.75,2.5 3.50,0.5 5.25,2.5 7.00,0.5 8.75,2.5 10.50,0.5 12.25,2.5 14.00,0.5 15.75,2.5 17.50,0.5 19.25,2.5 21.00,0.5 22.75,2.5 24.50,0.5 26.25,2.5 28.00,0.5 29.75,2.5 31.50,0.5 33.25,2.5 35.00,0.5 36.75,2.5 38.50,0.5 40.25,2.5 42.00,0.5 43.75,2.5 45.50,0.5 47.25,2.5 49.00,0.5 50.75,2.5 52.50,0.5 54.25,2.5 56.00,0.5 57.75,2.5 59.50,0.5 61.25,2.5 63.00,0.5 64.75,2.5 66.50,0.5 68.25,2.5 70.00,0.5 71.75,2.5 73.50,0.5 75.25,2.5 77.00,0.5 78.75,2.5 80.50,0.5 82.25,2.5 84.00,0.5 85.75,2.5 87.50,0.5 89.25,2.5 91.00,0.5 92.75,2.5 94.50,0.5 96.25,2.5 98.00,0.5 99.75,2.5 101.00,0.5" fill="none" stroke="#c94343" stroke-width="1"/></svg>
<svg class="a" style="left:834px;top:97px" width="59" height="3" viewBox="0 0 59 3"><polyline points="0.00,0.5 1.75,2.5 3.50,0.5 5.25,2.5 7.00,0.5 8.75,2.5 10.50,0.5 12.25,2.5 14.00,0.5 15.75,2.5 17.50,0.5 19.25,2.5 21.00,0.5 22.75,2.5 24.50,0.5 26.25,2.5 28.00,0.5 29.75,2.5 31.50,0.5 33.25,2.5 35.00,0.5 36.75,2.5 38.50,0.5 40.25,2.5 42.00,0.5 43.75,2.5 45.50,0.5 47.25,2.5 49.00,0.5 50.75,2.5 52.50,0.5 54.25,2.5 56.00,0.5 57.75,2.5 58.00,0.5" fill="none" stroke="#c94343" stroke-width="1"/></svg>
<svg class="a" style="left:877px;top:495px" width="401" height="2" viewBox="0 0 401 2"><polyline points="0.00,0.5 1.75,1.5 3.50,0.5 5.25,1.5 7.00,0.5 8.75,1.5 10.50,0.5 12.25,1.5 14.00,0.5 15.75,1.5 17.50,0.5 19.25,1.5 21.00,0.5 22.75,1.5 24.50,0.5 26.25,1.5 28.00,0.5 29.75,1.5 31.50,0.5 33.25,1.5 35.00,0.5 36.75,1.5 38.50,0.5 40.25,1.5 42.00,0.5 43.75,1.5 45.50,0.5 47.25,1.5 49.00,0.5 50.75,1.5 52.50,0.5 54.25,1.5 56.00,0.5 57.75,1.5 59.50,0.5 61.25,1.5 63.00,0.5 64.75,1.5 66.50,0.5 68.25,1.5 70.00,0.5 71.75,1.5 73.50,0.5 75.25,1.5 77.00,0.5 78.75,1.5 80.50,0.5 82.25,1.5 84.00,0.5 85.75,1.5 87.50,0.5 89.25,1.5 91.00,0.5 92.75,1.5 94.50,0.5 96.25,1.5 98.00,0.5 99.75,1.5 101.50,0.5 103.25,1.5 105.00,0.5 106.75,1.5 108.50,0.5 110.25,1.5 112.00,0.5 113.75,1.5 115.50,0.5 117.25,1.5 119.00,0.5 120.75,1.5 122.50,0.5 124.25,1.5 126.00,0.5 127.75,1.5 129.50,0.5 131.25,1.5 133.00,0.5 134.75,1.5 136.50,0.5 138.25,1.5 140.00,0.5 141.75,1.5 143.50,0.5 145.25,1.5 147.00,0.5 148.75,1.5 150.50,0.5 152.25,1.5 154.00,0.5 155.75,1.5 157.50,0.5 159.25,1.5 161.00,0.5 162.75,1.5 164.50,0.5 166.25,1.5 168.00,0.5 169.75,1.5 171.50,0.5 173.25,1.5 175.00,0.5 176.75,1.5 178.50,0.5 180.25,1.5 182.00,0.5 183.75,1.5 185.50,0.5 187.25,1.5 189.00,0.5 190.75,1.5 192.50,0.5 194.25,1.5 196.00,0.5 197.75,1.5 199.50,0.5 201.25,1.5 203.00,0.5 204.75,1.5 206.50,0.5 208.25,1.5 210.00,0.5 211.75,1.5 213.50,0.5 215.25,1.5 217.00,0.5 218.75,1.5 220.50,0.5 222.25,1.5 224.00,0.5 225.75,1.5 227.50,0.5 229.25,1.5 231.00,0.5 232.75,1.5 234.50,0.5 236.25,1.5 238.00,0.5 239.75,1.5 241.50,0.5 243.25,1.5 245.00,0.5 246.75,1.5 248.50,0.5 250.25,1.5 252.00,0.5 253.75,1.5 255.50,0.5 257.25,1.5 259.00,0.5 260.75,1.5 262.50,0.5 264.25,1.5 266.00,0.5 267.75,1.5 269.50,0.5 271.25,1.5 273.00,0.5 274.75,1.5 276.50,0.5 278.25,1.5 280.00,0.5 281.75,1.5 283.50,0.5 285.25,1.5 287.00,0.5 288.75,1.5 290.50,0.5 292.25,1.5 294.00,0.5 295.75,1.5 297.50,0.5 299.25,1.5 301.00,0.5 302.75,1.5 304.50,0.5 306.25,1.5 308.00,0.5 309.75,1.5 311.50,0.5 313.25,1.5 315.00,0.5 316.75,1.5 318.50,0.5 320.25,1.5 322.00,0.5 323.75,1.5 325.50,0.5 327.25,1.5 329.00,0.5 330.75,1.5 332.50,0.5 334.25,1.5 336.00,0.5 337.75,1.5 339.50,0.5 341.25,1.5 343.00,0.5 344.75,1.5 346.50,0.5 348.25,1.5 350.00,0.5 351.75,1.5 353.50,0.5 355.25,1.5 357.00,0.5 358.75,1.5 360.50,0.5 362.25,1.5 364.00,0.5 365.75,1.5 367.50,0.5 369.25,1.5 371.00,0.5 372.75,1.5 374.50,0.5 376.25,1.5 378.00,0.5 379.75,1.5 381.50,0.5 383.25,1.5 385.00,0.5 386.75,1.5 388.50,0.5 390.25,1.5 392.00,0.5 393.75,1.5 395.50,0.5 397.25,1.5 399.00,0.5 400.00,1.5" fill="none" stroke="#c94343" stroke-width="1"/></svg>
<svg class="a" style="left:907px;top:880px" width="191" height="2" viewBox="0 0 191 2"><polyline points="0.00,0.5 1.75,1.5 3.50,0.5 5.25,1.5 7.00,0.5 8.75,1.5 10.50,0.5 12.25,1.5 14.00,0.5 15.75,1.5 17.50,0.5 19.25,1.5 21.00,0.5 22.75,1.5 24.50,0.5 26.25,1.5 28.00,0.5 29.75,1.5 31.50,0.5 33.25,1.5 35.00,0.5 36.75,1.5 38.50,0.5 40.25,1.5 42.00,0.5 43.75,1.5 45.50,0.5 47.25,1.5 49.00,0.5 50.75,1.5 52.50,0.5 54.25,1.5 56.00,0.5 57.75,1.5 59.50,0.5 61.25,1.5 63.00,0.5 64.75,1.5 66.50,0.5 68.25,1.5 70.00,0.5 71.75,1.5 73.50,0.5 75.25,1.5 77.00,0.5 78.75,1.5 80.50,0.5 82.25,1.5 84.00,0.5 85.75,1.5 87.50,0.5 89.25,1.5 91.00,0.5 92.75,1.5 94.50,0.5 96.25,1.5 98.00,0.5 99.75,1.5 101.50,0.5 103.25,1.5 105.00,0.5 106.75,1.5 108.50,0.5 110.25,1.5 112.00,0.5 113.75,1.5 115.50,0.5 117.25,1.5 119.00,0.5 120.75,1.5 122.50,0.5 124.25,1.5 126.00,0.5 127.75,1.5 129.50,0.5 131.25,1.5 133.00,0.5 134.75,1.5 136.50,0.5 138.25,1.5 140.00,0.5 141.75,1.5 143.50,0.5 145.25,1.5 147.00,0.5 148.75,1.5 150.50,0.5 152.25,1.5 154.00,0.5 155.75,1.5 157.50,0.5 159.25,1.5 161.00,0.5 162.75,1.5 164.50,0.5 166.25,1.5 168.00,0.5 169.75,1.5 171.50,0.5 173.25,1.5 175.00,0.5 176.75,1.5 178.50,0.5 180.25,1.5 182.00,0.5 183.75,1.5 185.50,0.5 187.25,1.5 189.00,0.5 190.00,1.5" fill="none" stroke="#c94343" stroke-width="1"/></svg>
<!-- ===== popup ===== -->
<div class="a" style="left:1017px;top:504px;width:726px;height:354px;background:#56595b"></div>
<div class="a" style="left:1018px;top:505px;width:724px;height:75px;background:#4b4d4d"></div>
<div class="a" style="left:1018px;top:580px;width:724px;height:1px;background:#5b5e60"></div>
<div class="a" style="left:1018px;top:581px;width:724px;height:65px;background:#45484a"></div>
<div class="a" style="left:1018px;top:646px;width:724px;height:1px;background:#5b5e60"></div>
<div class="a" style="left:1018px;top:647px;width:724px;height:210px;background:#45484a"></div>
<div class="t" style="left:1031px;top:521.30px;font-size:15px;color:#bbbbbb;letter-spacing:-0.2px">Method references are not supported at language level '6'</div>
<div class="t" style="left:1031px;top:551.30px;font-size:15px;color:#589df6">Set language level to 8 - Lambdas, type annotations etc.</div>
<div class="t" style="left:1415px;top:551.30px;font-size:15px;color:#8c8c8c">Alt+Shift+Enter</div>
<div class="t" style="left:1547px;top:551.30px;font-size:15px;color:#589df6">More actions...</div>
<div class="t" style="left:1655px;top:551.30px;font-size:15px;color:#8c8c8c">Alt+Enter</div>
<svg class="a" style="left:1724px;top:519px" width="6" height="16" viewBox="0 0 6 16"><circle cx="3" cy="2.5" r="1.8" fill="#afb1b3"/><circle cx="3" cy="8" r="1.8" fill="#afb1b3"/><circle cx="3" cy="13.5" r="1.8" fill="#afb1b3"/></svg>
<div class="t" style="left:1031px;top:600.72px;font-size:13.33px;color:#bbb529;font-family:'Liberation Mono',monospace">@FunctionalInterface</div>
<div class="t" style="left:1031px;top:620.39px;font-size:14.9px;color:#a9b7c6;font-family:'Liberation Mono',monospace"><span style="color:#cc7832">public interface</span> Consumer&lt;<span style="color:#507874">T</span>&gt;</div>
<div class="t" style="left:1031px;top:659.29px;font-size:15.6px;color:#bbbbbb">Represents an operation that accepts a single input argument and returns no result. Unlike most</div>
<div class="t" style="left:1031px;top:681.29px;font-size:15.6px;color:#bbbbbb">other functional interfaces, <span style="font-family:'Liberation Mono',monospace;font-size:14.8px;color:#bbbbbb">Consumer</span> is expected to operate via side-effects.</div>
<div class="t" style="left:1031px;top:705.29px;font-size:15.6px;color:#bbbbbb">This is a <span style="color:#589df6">functional interface</span> whose functional method is <span style="font-family:'Liberation Mono',monospace;font-size:14.8px;color:#589df6">accept(Object)</span>.</div>
<div class="t" style="left:1033px;top:741.30px;font-size:15px;color:#8c8c8c">Since:</div>
<div class="t" style="left:1159px;top:741.30px;font-size:15px;color:#bbbbbb">1.8</div>
<div class="t" style="left:1033px;top:770.80px;font-size:15px;color:#8c8c8c">Type parameters:</div>
<div class="t" style="left:1158px;top:770.80px;font-size:15px;color:#bbbbbb">&lt;<span style="color:#507874">T</span>&gt; – the type of the input to the operation</div>
<svg class="a" style="left:1031px;top:800px" width="19" height="14" viewBox="0 0 19 14"><path d="M0 0H7L9 2H19V14H0Z" fill="#8b9aa3"/><circle cx="7" cy="8" r="2" fill="#45484a"/></svg>
<div class="t" style="left:1056px;top:800.43px;font-size:14.85px;color:#589df6;font-family:'Liberation Mono',monospace">java.util.function</div>
<svg class="a" style="left:1031px;top:826px" width="20" height="16" viewBox="0 0 20 16"><path d="M0 0H7L9 2H17V6H9V16H0Z" fill="#8b9aa3"/><rect x="10" y="8" width="2.5" height="8" fill="#59a869"/><rect x="13.5" y="6" width="2.5" height="10" fill="#8b9aa3"/><rect x="17" y="9" width="2.5" height="7" fill="#40b6e0"/></svg>
<div class="t" style="left:1057px;top:825.80px;font-size:15px;color:#bbbbbb">&lt; corretto-17 &gt;</div>
<svg class="a" style="left:1724px;top:835px" width="6" height="16" viewBox="0 0 6 16"><circle cx="3" cy="2.5" r="1.8" fill="#afb1b3"/><circle cx="3" cy="8" r="1.8" fill="#afb1b3"/><circle cx="3" cy="13.5" r="1.8" fill="#afb1b3"/></svg>
<!-- ===== bottom ===== -->
<svg class="a" style="left:41px;top:983px" width="12" height="16" viewBox="0 0 12 16"><circle cx="2.5" cy="2.5" r="2" fill="#afb1b3"/><circle cx="2.5" cy="13.5" r="2" fill="#afb1b3"/><circle cx="9.5" cy="4" r="2" fill="#afb1b3"/><path d="M2.5 2.5V13.5M9.5 4Q9.5 9 2.5 10" fill="none" stroke="#afb1b3" stroke-width="1.8"/></svg>
<div class="t" style="left:60px;top:984.74px;font-size:13.3px;color:#bbbbbb">Git</div>
<svg class="a" style="left:102px;top:984px" width="14" height="12" viewBox="0 0 14 12"><g fill="#afb1b3"><rect x="0" y="0" width="2" height="2"/><rect x="0" y="3.3" width="2" height="2"/><rect x="0" y="6.6" width="2" height="2"/><rect x="0" y="10" width="2" height="2"/><rect x="3.5" y="0" width="10.5" height="2"/><rect x="3.5" y="3.3" width="10.5" height="2"/><rect x="3.5" y="6.6" width="10.5" height="2"/><rect x="3.5" y="10" width="10.5" height="2"/></g></svg>
<div class="t" style="left:121px;top:984.74px;font-size:13.3px;color:#bbbbbb;letter-spacing:-0.6px">TODO</div>
<svg class="a" style="left:183px;top:983px" width="15" height="15" viewBox="0 0 15 15"><circle cx="7.5" cy="7.5" r="7" fill="#c75450"/><path d="M7.5 3.5V8.5" stroke="#fff" stroke-width="1.8"/><circle cx="7.5" cy="11" r="1.1" fill="#fff"/></svg>
<div class="t" style="left:204px;top:984.74px;font-size:13.3px;color:#bbbbbb;letter-spacing:-0.25px">Problems</div>
<svg class="a" style="left:286px;top:983px" width="15" height="14" viewBox="0 0 15 14"><rect x="0" y="0" width="15" height="14" fill="#afb1b3"/><path d="M3 3.5L6 6L3 8.5" fill="none" stroke="#3c3f41" stroke-width="1.3"/><rect x="7" y="9.5" width="5" height="1.3" fill="#3c3f41"/></svg>
<div class="t" style="left:306px;top:984.74px;font-size:13.3px;color:#bbbbbb">Terminal</div>
<svg class="a" style="left:385px;top:983px" width="16" height="16" viewBox="0 0 16 16"><rect x="0.8" y="0.8" width="14.4" height="14.4" fill="none" stroke="#7d8082" stroke-width="1.6"/><path d="M5.5 4H4V12H5.5M10.5 4H12V12H10.5" fill="none" stroke="#7d8082" stroke-width="1.4"/></svg>
<div class="t" style="left:408px;top:984.74px;font-size:13.3px;color:#bbbbbb;letter-spacing:-0.35px">Style Checker</div>
<svg class="a" style="left:515px;top:983px" width="15" height="16" viewBox="0 0 15 16"><path d="M7.5 0L15 3.5L7.5 7L0 3.5Z" fill="#afb1b3"/><path d="M0 7L7.5 10.5L15 7M0 10.5L7.5 14L15 10.5" fill="none" stroke="#afb1b3" stroke-width="1.6"/></svg>
<div class="t" style="left:536px;top:984.74px;font-size:13.3px;color:#bbbbbb;letter-spacing:-0.35px">Python Packages</div>
<svg class="a" style="left:661px;top:983px" width="16" height="16" viewBox="0 0 16 16"><path d="M4 0.5H12L15.5 8L12 15.5H4L0.5 8Z" fill="#afb1b3"/><path d="M6 4.5L11 8L6 11.5Z" fill="#3c3f41"/></svg>
<div class="t" style="left:683px;top:984.74px;font-size:13.3px;color:#bbbbbb;letter-spacing:-0.3px">Services</div>
<svg class="a" style="left:8px;top:1010px" width="15" height="15" viewBox="0 0 15 15"><path d="M3.5 3.5H14.5V12.5H3.5Z" fill="none" stroke="#afb1b3" stroke-width="1.3"/><path d="M0.8 5V14.2H11" fill="none" stroke="#7d8082" stroke-width="1.3"/></svg>
<div class="t" style="left:34px;top:1009.47px;font-size:14.8px;color:#bbbbbb">Cannot resolve symbol 'Main'</div>
<div class="t" style="left:1594px;top:1010.15px;font-size:14px;color:#bbbbbb">244:20</div>
<div class="t" style="left:1651px;top:1010.15px;font-size:14px;color:#bbbbbb">CRLF</div>
<div class="t" style="left:1699px;top:1010.15px;font-size:14px;color:#bbbbbb;letter-spacing:-0.3px">UTF-8</div>
<div class="t" style="left:1753px;top:1010.15px;font-size:14px;color:#bbbbbb">4 spaces</div>
<svg class="a" style="left:1826px;top:1009px" width="17" height="18" viewBox="0 0 17 18"><circle cx="2.5" cy="2.5" r="2" fill="#afb1b3"/><circle cx="2.5" cy="15" r="2" fill="#afb1b3"/><circle cx="9.5" cy="3" r="2" fill="#afb1b3"/><path d="M2.5 2.5V15M9.5 3Q9.5 9 2.5 11" fill="none" stroke="#afb1b3" stroke-width="1.6"/><circle cx="12" cy="14" r="3.2" fill="#59a869"/></svg>
<div class="t" style="left:1845px;top:1010.15px;font-size:14px;color:#bbbbbb">main</div>
<svg class="a" style="left:1889px;top:1009px" width="16" height="16" viewBox="0 0 16 16"><path d="M2.5 7V4Q2.5 1 5.5 1Q8.5 1 8.5 4" fill="none" stroke="#afb1b3" stroke-width="1.6"/><rect x="4" y="7" width="12" height="9" fill="#afb1b3"/></svg>
<!-- ===== taskbar ===== -->
<div class="a" style="left:0px;top:1030px;width:1920px;height:50px;background:#1f2125"></div>
<svg class="a" style="left:20px;top:1045px" width="21" height="21" viewBox="0 0 21 21"><path d="M0 2.8L8.6 1.6V9.8H0Z M9.8 1.4L21 0V9.8H9.8Z M0 11H8.6V19.4L0 18.2Z M9.8 11H21V21L9.8 19.6Z" fill="#ffffff"/></svg>
<div class="a" style="left:60px;top:1030px;width:430px;height:50px;background:#f0f0f0"></div>
<svg class="a" style="left:75px;top:1045px" width="21" height="21" viewBox="0 0 21 21"><circle cx="12.5" cy="8.5" r="6.8" fill="none" stroke="#1a1a1a" stroke-width="1.5"/><path d="M7.6 13.4L1 20" stroke="#1a1a1a" stroke-width="1.6"/></svg>
<div class="t" style="left:110px;top:1046.51px;font-size:18.3px;color:#1e1e1e">Type here to search</div>
<svg class="a" style="left:409px;top:1036px" width="62" height="42" viewBox="0 0 62 42">
<defs><linearGradient id="hill" x1="0" y1="0" x2="0" y2="1"><stop offset="0" stop-color="#7fd38f"/><stop offset="1" stop-color="#b9e7c0"/></linearGradient>
<linearGradient id="cal" x1="0" y1="0" x2="0" y2="1"><stop offset="0" stop-color="#ffffff"/><stop offset="1" stop-color="#d9d9d9"/></linearGradient></defs>
<path d="M1 34Q10 18 19 18Q24 18 28 24L32 34Z" fill="url(#hill)"/>
<path d="M8 6L10 2L12 6L16 8L12 10L10 14L8 10L4 8Z" fill="#f9c623"/><circle cx="3" cy="13" r="1.8" fill="#f9c623"/><circle cx="16" cy="3" r="1" fill="#f9c623"/>
<rect x="26" y="7" width="29" height="30" rx="4" fill="url(#cal)"/><path d="M26 11Q26 7 30 7H51Q55 7 55 11V14H26Z" fill="#4a6cdb"/><rect x="30" y="3" width="2" height="6" rx="1" fill="#c0c0c0"/><rect x="48" y="3" width="2" height="6" rx="1" fill="#c0c0c0"/>
<path d="M53 21Q45 21 45 29Q45 34 53 41Q61 34 61 29Q61 21 53 21Z" fill="#e8601c"/><circle cx="53" cy="28.5" r="3" fill="#f3f3f3"/>
</svg>
<svg class="a" style="left:510px;top:1046px" width="20" height="20" viewBox="0 0 20 20"><circle cx="10" cy="10" r="8.3" fill="none" stroke="#ffffff" stroke-width="2.6"/></svg>
<svg class="a" style="left:569px;top:1044px" width="22" height="22" viewBox="0 0 22 22"><path d="M0.8 1V4H11.2V1M0.8 21V18H11.2V21" fill="none" stroke="#fff" stroke-width="1.5"/><rect x="0.8" y="6.8" width="10.4" height="8.4" fill="none" stroke="#fff" stroke-width="1.5"/><path d="M20 1V21" stroke="#fff" stroke-width="1.5"/><rect x="18" y="9" width="4" height="4" fill="#fff"/></svg>
<svg class="a" style="left:628px;top:1040px" width="31" height="31" viewBox="0 0 31 31"><path d="M8 6V3Q8 1 10 1H21Q23 1 23 3V6" fill="none" stroke="#34b4eb" stroke-width="2"/><rect x="1" y="5" width="29" height="25" rx="4" fill="#fbfbfb"/><rect x="9" y="12" width="6" height="6" fill="#f25022"/><rect x="16" y="12" width="6" height="6" fill="#7fba00"/><rect x="9" y="19" width="6" height="6" fill="#00a4ef"/><rect x="16" y="19" width="6" height="6" fill="#ffb900"/></svg>
<svg class="a" style="left:691px;top:1042px" width="30" height="26" viewBox="0 0 30 26"><path d="M1 2Q1 1 2 1H10L12 3H1Z" fill="#e0a526"/><rect x="1" y="3" width="28" height="20" rx="1.5" fill="#fcd669"/><path d="M9 22V14H21V22" fill="none" stroke="#2f8fdf" stroke-width="3.2"/><rect x="7" y="11.5" width="16" height="3.2" fill="#2f8fdf"/></svg>
<svg class="a" style="left:752px;top:1040px" width="50" height="38" viewBox="0 0 50 38"><defs><linearGradient id="mailg" x1="0" y1="0" x2="0" y2="1"><stop offset="0" stop-color="#0a6ac9"/><stop offset="1" stop-color="#34b6f5"/></linearGradient></defs><path d="M1 10L16 1L31 10V29H1Z" fill="url(#mailg)"/><path d="M1 10L16 21L31 10L16 6Z" fill="#ffffff" opacity="0.92"/><rect x="12.5" y="14" width="35" height="21" rx="10.5" fill="#2b2b2b" stroke="#9a9a9a" stroke-width="1"/><text x="16" y="31" font-family="Liberation Sans" font-size="16" fill="#fff">99+</text></svg>
<div class="a" style="left:800px;top:1030px;width:61px;height:50px;background:#a7642c"></div>
<div class="a" style="left:800px;top:1077px;width:61px;height:3px;background:#ff7900"></div>
<svg class="a" style="left:814px;top:1039px" width="34" height="34" viewBox="0 0 34 34"><circle cx="16" cy="16" r="15" fill="#5865f2"/><path d="M8.5 11Q12 8.5 14 9L14.5 10Q16 9.7 17.5 10L18 9Q20 8.5 23.5 11Q26 15.5 25.5 20.5Q23 22.5 20.5 23L19.5 21.5Q17 22.2 12.5 21.5L11.5 23Q9 22.5 6.5 20.5Q6 15.5 8.5 11Z" fill="#fff"/><circle cx="12.8" cy="16.5" r="1.7" fill="#5865f2"/><circle cx="19.2" cy="16.5" r="1.7" fill="#5865f2"/><circle cx="23.5" cy="23.5" r="9.5" fill="#e8474a"/><text x="23.5" y="28.5" font-family="Liberation Sans" font-size="13" fill="#fff" text-anchor="middle">9+</text></svg>
<svg class="a" style="left:879px;top:1040px" width="24" height="29" viewBox="0 0 24 29"><defs><linearGradient id="offg" x1="0" y1="0" x2="1" y2="1"><stop offset="0" stop-color="#d83b01"/><stop offset="0.5" stop-color="#e64a19"/><stop offset="1" stop-color="#ff8f00"/></linearGradient></defs><path d="M14 0L23 3V26L14 29L1 24V5Z" fill="url(#offg)"/><path d="M14 5V24L6 21.5V7.5Z" fill="#1f2023"/><path d="M1 5L14 0V5L6 7.5V21.5L14 24V29L1 24Z" fill="#c82333"/></svg>
<svg class="a" style="left:939px;top:1040px" width="31" height="31" viewBox="0 0 31 31"><defs><linearGradient id="edg1" x1="0" y1="0" x2="1" y2="1"><stop offset="0" stop-color="#35c1f1"/><stop offset="1" stop-color="#66eb6e"/></linearGradient><linearGradient id="edg2" x1="0" y1="0" x2="0" y2="1"><stop offset="0" stop-color="#0c59a4"/><stop offset="1" stop-color="#114a8b"/></linearGradient></defs><circle cx="15.5" cy="15.5" r="15" fill="url(#edg1)"/><path d="M2 20Q3 8 15 8Q24 8 25 16Q25 19 20 19H11Q11 25 20 26Q24 26 27 24Q23 31 15 30Q4 29 2 20Z" fill="url(#edg2)"/><path d="M11 19Q12 13 17 13Q21 13 21 17" fill="#1f8ad8"/></svg>
<svg class="a" style="left:995px;top:1035px" width="40" height="40" viewBox="0 0 40 40"><path d="M25.6 5L19.8 10.2L21.6 14.3Z M13.9 15.7L19.5 10.3L27 23.5L21.2 29.5Z M19.2 24.8L20.6 29.6L15 34.8Z" fill="#ffffff"/></svg>
<svg class="a" style="left:1063px;top:1040px" width="34" height="34" viewBox="0 0 34 34"><circle cx="14" cy="14" r="13.5" fill="#db4437"/><path d="M14 14L2.3 20.75A13.5 13.5 0 0 0 14 27.5L25.7 20.75A13.5 13.5 0 0 0 27.5 14Z" fill="#0f9d58"/><path d="M14 14L25.7 7.25A13.5 13.5 0 0 1 25.7 20.75L14 27.5Z" fill="#ffcd40"/><path d="M14 14L2.3 20.75A13.5 13.5 0 0 1 2.3 7.25Z" fill="#0f9d58"/><circle cx="14" cy="14" r="6" fill="#fff"/><circle cx="14" cy="14" r="4.8" fill="#4285f4"/><circle cx="22" cy="23" r="10" fill="#5d4037"/><text x="22" y="28" font-family="Liberation Sans" font-size="13" fill="#d7ccc8" text-anchor="middle">M</text></svg>
<div class="a" style="left:1053px;top:1077px;width:40px;height:3px;background:#76b9ed"></div>
<div class="a" style="left:1094px;top:1077px;width:10px;height:3px;background:#5a95c7"></div>
<div class="a" style="left:1110px;top:1030px;width:61px;height:50px;background:#4b4c4e"></div>
<div class="a" style="left:1110px;top:1077px;width:61px;height:3px;background:#76b9ed"></div>
<svg class="a" style="left:1127px;top:1042px" width="26" height="26" viewBox="0 0 26 26"><defs><linearGradient id="ijt" x1="0" y1="0" x2="1" y2="1"><stop offset="0" stop-color="#fe2857"/><stop offset="0.45" stop-color="#7b3ff2"/><stop offset="1" stop-color="#0bb5f6"/></linearGradient></defs><rect width="26" height="26" fill="url(#ijt)"/><rect x="2.5" y="2.5" width="21" height="21" fill="#000"/><text x="5" y="14" font-family="Liberation Mono" font-weight="bold" font-size="11" fill="#fff">IJ</text><rect x="5" y="18.5" width="8" height="1.6" fill="#fff"/></svg>
<svg class="a" style="left:1446px;top:1041px" width="32" height="31" viewBox="0 0 32 31"><circle cx="15" cy="15" r="13.5" fill="#1c9ad6" stroke="#fff" stroke-width="2.2"/><text x="15" y="22" font-family="Liberation Sans" font-weight="bold" font-size="20" fill="#fff" text-anchor="middle">?</text><circle cx="24.5" cy="23.5" r="6.5" fill="#e81123"/><rect x="23.5" y="19" width="2" height="5.5" fill="#fff"/><rect x="23.5" y="25.8" width="2" height="2" fill="#fff"/></svg>
<svg class="a" style="left:1586px;top:1044px" width="23" height="23" viewBox="0 0 23 23"><defs><linearGradient id="sun" x1="0" y1="0" x2="0.6" y2="1"><stop offset="0" stop-color="#ffc400"/><stop offset="1" stop-color="#f07800"/></linearGradient></defs><circle cx="11.5" cy="11.5" r="11" fill="url(#sun)"/></svg>
<div class="t" style="left:1622px;top:1049.36px;font-size:17.3px;color:#ffffff">81°F&nbsp; Sunny</div>
<svg class="a" style="left:1741px;top:1049px" width="18" height="11" viewBox="0 0 18 11"><path d="M1 10L9 2L17 10" fill="none" stroke="#fff" stroke-width="1.3"/></svg>
<div class="t" style="left:1786px;top:1035.73px;font-size:14.5px;color:#ffffff;letter-spacing:-0.4px">2:15 PM</div>
<div class="t" style="left:1782px;top:1059.73px;font-size:14.5px;color:#ffffff;letter-spacing:-0.3px">7/6/2022</div>
<svg class="a" style="left:1868px;top:1044px" width="32" height="32" viewBox="0 0 32 32"><path d="M1 1H21V17H10L6 21V17H1Z" fill="#ffffff"/><path d="M5 5H17M5 9H17M5 13H13" stroke="#1f2023" stroke-width="1.3"/><circle cx="20" cy="20" r="9.5" fill="#2b2b2b" stroke="#8a8a8a" stroke-width="1"/><text x="20" y="25.5" font-family="Liberation Sans" font-size="15" fill="#fff" text-anchor="middle">1</text></svg>
<div class="a" style="left:1914px;top:1030px;width:1px;height:50px;background:#5a5a5a"></div>
</body></html>
